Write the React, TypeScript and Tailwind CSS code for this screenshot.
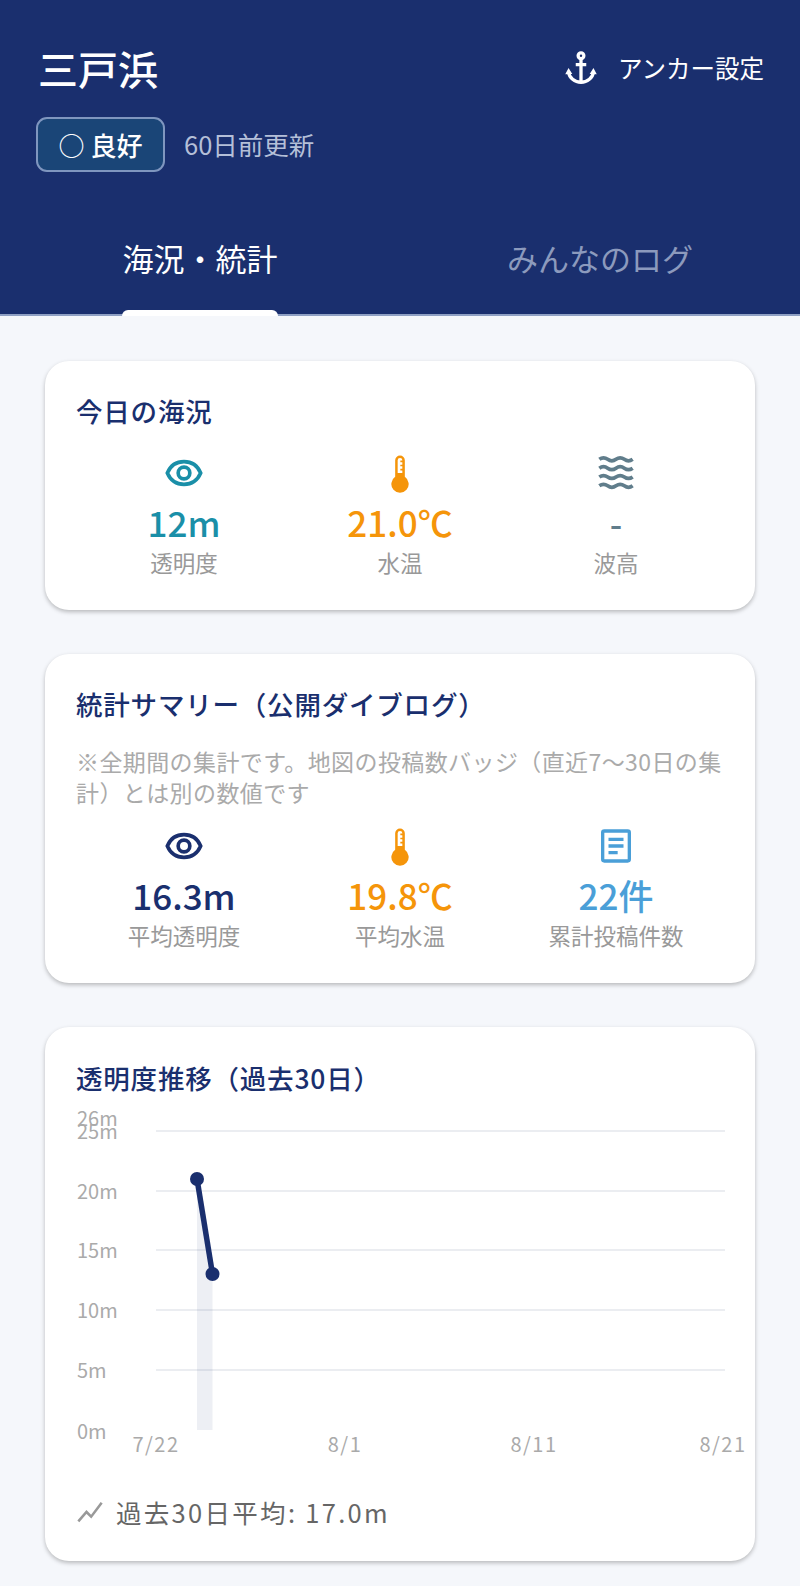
const eye = (
  <>
    <path d="M2 12C3.800 7.800 7.500 5.200 12 5.200S20.200 7.800 22 12c-1.800 4.200-5.500 6.800-10 6.800S3.800 16.200 2 12Z" fill="none" stroke="currentColor" strokeWidth="2.200" />
    <circle cx="12" cy="12" r="3.500" fill="none" stroke="currentColor" strokeWidth="2.200" />
  </>
);

const thermometer = (
  <path
    fillRule="evenodd"
    d="M12 1.500a2.900 2.900 0 0 1 2.900 2.900v9.900a5.200 5.200 0 1 1-5.800 0V4.400A2.900 2.900 0 0 1 12 1.500ZM12 3a1.400 1.400 0 0 0-1.400 1.400V12h2.800v-1.500h-1.200v-1h1.200V8h-1.200V7h1.200V5.500h-1.200v-1h1.200A1.400 1.400 0 0 0 12 3Z"
    fill="currentColor"
  />
);

const waves = (
  <g fill="none" stroke="currentColor" strokeWidth="2.200">
    <path d="M2 3.800c1.670-1.200 3.330-1.200 5 0s3.330 1.200 5 0 3.330-1.200 5 0 3.330 1.200 5 0" />
    <path d="M2 9.100c1.670-1.200 3.330-1.200 5 0s3.330 1.200 5 0 3.330-1.200 5 0 3.330 1.200 5 0" />
    <path d="M2 14.400c1.670-1.200 3.330-1.200 5 0s3.330 1.200 5 0 3.330-1.200 5 0 3.330 1.200 5 0" />
    <path d="M2 19.700c1.670-1.200 3.330-1.200 5 0s3.330 1.200 5 0 3.330-1.200 5 0 3.330 1.200 5 0" />
  </g>
);

const note = (
  <g fill="none" stroke="currentColor" strokeWidth="2">
    <rect x="4" y="3" width="16" height="18" rx="1" />
    <path d="M7.500 8h9M7.500 12h9M7.500 16h5.500" />
  </g>
);

const Stat = ({
  icon,
  value,
  label,
  color,
}: {
  icon: React.ReactNode;
  value: string;
  label: string;
  color: string;
}) => (
  <div className="flex flex-col items-center">
    <svg viewBox="0 0 24 24" className={`w-10 h-10 ${color}`}>
      {icon}
    </svg>
    <div className={`mt-[4px] text-[35px] leading-[50px] font-medium ${color}`}>{value}</div>
    <div className="text-[22.500px] leading-[30px] text-[#999999]">{label}</div>
  </div>
);

const Card = ({ className, children }: { className: string; children: React.ReactNode }) => (
  <section className={`mx-[45px] px-[31px] rounded-[24px] bg-white shadow-[0_2px_4px_rgba(0,0,0,0.25)] ${className}`}>
    {children}
  </section>
);

const yTicks = [
  { label: "25m", y: 1131 },
  { label: "20m", y: 1191 },
  { label: "15m", y: 1250 },
  { label: "10m", y: 1310 },
  { label: "5m", y: 1370 },
];

const xTicks = [
  { label: "7/22", x: 156 },
  { label: "8/1", x: 345 },
  { label: "8/11", x: 534 },
  { label: "8/21", x: 723 },
];

// chart coordinates are page pixels, the viewBox shifts them into the card
const Chart = () => (
  <svg viewBox="76 1108 648 360" className="w-[648px] h-[360px] mt-[10px] overflow-visible">
    {yTicks.map((t) => (
      <line key={t.label} x1="156" x2="725" y1={t.y} y2={t.y} stroke="#ebedf1" strokeWidth="2" />
    ))}
    <polygon points="197,1179 212.500,1274 212.500,1430 197,1430" fill="#1a2f6e" fillOpacity="0.08" />
    <text x="77" y="1126" fontSize="20" fill="#aaaaaa">26m</text>
    {yTicks.map((t) => (
      <text key={t.label} x="77" y={t.y + 8} fontSize="20" fill="#aaaaaa">{t.label}</text>
    ))}
    <text x="77" y="1439" fontSize="20" fill="#aaaaaa">0m</text>
    {xTicks.map((t) => (
      <text key={t.label} x={t.x} y="1452" textAnchor="middle" fontSize="20" letterSpacing="1.500" fill="#aaaaaa">{t.label}</text>
    ))}
    <line x1="197" y1="1179" x2="212.500" y2="1274" stroke="#1a2f6e" strokeWidth="5.500" />
    <circle cx="197" cy="1179" r="7" fill="#1a2f6e" />
    <circle cx="212.500" cy="1274" r="7" fill="#1a2f6e" />
  </svg>
);

export default function App() {
  return (
    <div className="min-h-[1586px] bg-[#f5f7fb] font-['Noto_Sans_CJK_JP','Noto_Sans',sans-serif] [text-spacing-trim:space-all]">
      <header className="h-[316px] bg-[#1a2f6e] border-b-2 border-[#8fa0c4] text-white">
        <div className="flex items-center justify-between pl-[38px] pr-[36px] pt-[42px]">
          <h1 className="text-[40px] leading-[52px] font-medium">三戸浜</h1>
          <div className="flex items-center gap-[19px]">
            <svg viewBox="0 0 24 24" className="w-[36px] h-[36px]">
              <g fill="none" stroke="currentColor" strokeWidth="2.200">
                <circle cx="12" cy="3.800" r="1.900" />
                <path d="M12 5.700V21.500M8.500 9.700h7" />
                <path d="M3.600 14.500c.5 4 4.200 7 8.400 7s7.900-3 8.400-7" />
              </g>
              <path fill="currentColor" d="M1.500 16.200 3.700 12l2.500 4ZM22.500 16.200 20.300 12l-2.500 4Z" />
            </svg>
            <span className="text-[24.500px] leading-[36px]">アンカー設定</span>
          </div>
        </div>
        <div className="flex items-center pl-[36px] mt-[23px]">
          <div className="flex items-center justify-center w-[129px] h-[55px] rounded-[11px] bg-[#1a4577] border-2 border-[#7f96bf] text-[26px] font-medium">
            ○ 良好
          </div>
          <span className="ml-[19px] text-[25.500px] text-[#b4bfd8]">60日前更新</span>
        </div>
        <nav className="grid grid-cols-2 mt-[63px] text-[31px] leading-[46px] text-center">
          <div className="relative h-[77px] text-white">
            海況・統計
            <span className="absolute left-[122px] bottom-[-4px] w-[156px] h-[6px] rounded-t-[6px] bg-white" />
          </div>
          <div className="text-[#8c9abd]">みんなのログ</div>
        </nav>
      </header>

      <Card className="mt-[45px] h-[249px] pt-[30px]">
        <h2 className="text-[26.500px] leading-[40px] tracking-[0.800px] font-medium text-[#1a2f6e]">今日の海況</h2>
        <div className="grid grid-cols-3 mt-[22px]">
          <Stat icon={eye} value="12m" label="透明度" color="text-[#1a8fa8]" />
          <Stat icon={thermometer} value="21.0℃" label="水温" color="text-[#f5950a]" />
          <Stat icon={waves} value="-" label="波高" color="text-[#607d8b]" />
        </div>
      </Card>

      <Card className="mt-[44px] h-[329px] pt-[30px]">
        <h2 className="text-[26.500px] leading-[40px] tracking-[0.800px] font-medium text-[#1a2f6e]">統計サマリー（公開ダイブログ）</h2>
        <p className="mt-[22px] text-[23px] leading-[31px] tracking-[0.400px] text-[#aaaaaa]">
          ※全期間の集計です。地図の投稿数バッジ（直近7〜30日の集計）とは別の数値です
        </p>
        <div className="grid grid-cols-3 mt-[18px]">
          <Stat icon={eye} value="16.3m" label="平均透明度" color="text-[#1a2f6e]" />
          <Stat icon={thermometer} value="19.8℃" label="平均水温" color="text-[#f5950a]" />
          <Stat icon={note} value="22件" label="累計投稿件数" color="text-[#4a9fd8]" />
        </div>
      </Card>

      <Card className="mt-[44px] h-[534px] pt-[31px]">
        <h2 className="text-[26.500px] leading-[40px] tracking-[0.800px] font-medium text-[#1a2f6e]">透明度推移（過去30日）</h2>
        <Chart />
        <div className="flex items-center mt-[26px] text-[25.500px] leading-[36px] tracking-[2.300px] text-[#666666]">
          <svg viewBox="0 0 24 24" className="w-7 h-7 text-[#999999]">
            <path fill="none" stroke="currentColor" strokeWidth="2.200" d="M2 20l7-8 4 4 9-12" />
          </svg>
          <span className="ml-[12px]">過去30日平均: 17.0m</span>
        </div>
      </Card>
    </div>
  );
}
